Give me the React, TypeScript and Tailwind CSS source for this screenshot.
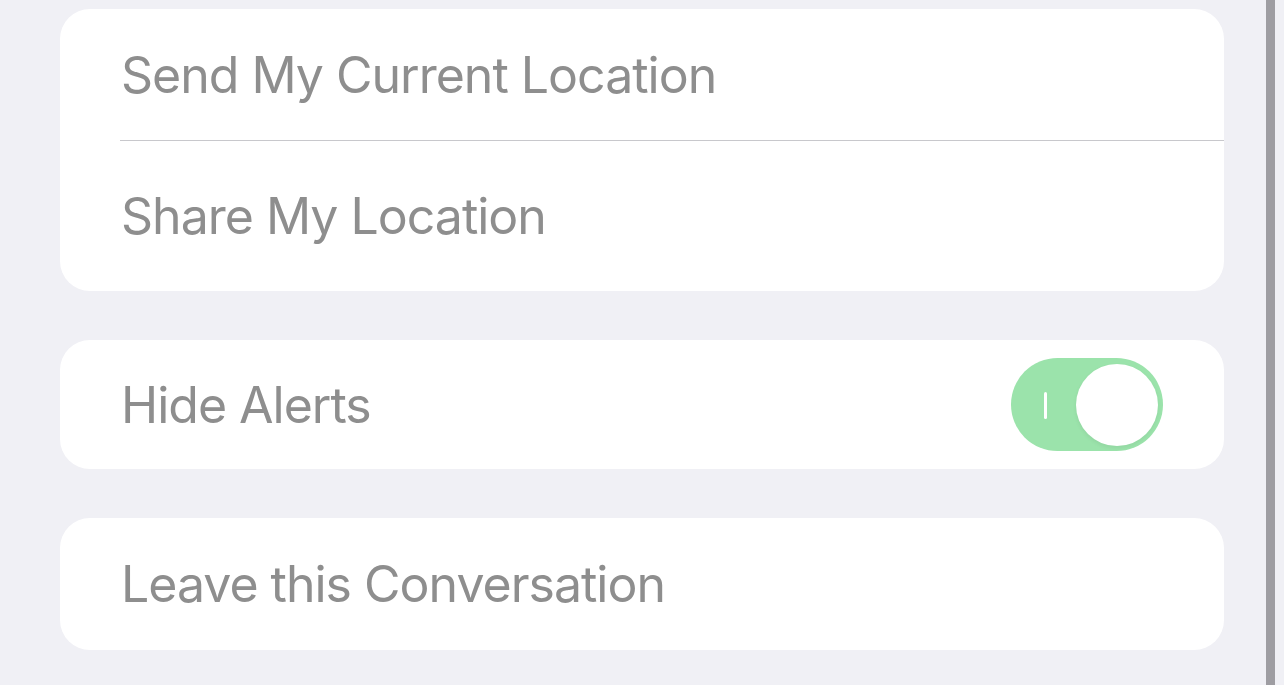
import { useState } from 'react';

function Row({ label, children }: { label: string; children?: React.ReactNode }) {
  return (
    <div className="flex items-center justify-between h-full pl-[61px] pr-[61px]">
      <span className="text-[50px] leading-none text-[#8e8e8e] tracking-[-1px]">{label}</span>
      {children}
    </div>
  );
}

function Toggle({ on, onChange }: { on: boolean; onChange: () => void }) {
  return (
    <button
      onClick={onChange}
      className={`relative w-[152px] h-[93px] rounded-full flex items-center px-[5px] ${on ? 'bg-[#9be3ab] justify-end' : 'bg-[#e9e9eb] justify-start'}`}
    >
      {on && <span className="absolute left-[33px] top-[34px] w-[3px] h-[27px] bg-white rounded-sm" />}
      <span className="w-[82px] h-[82px] rounded-full bg-white shadow-[0_2px_4px_rgba(0,0,0,0.06)]" />
    </button>
  );
}

export default function App() {
  const [hideAlerts, setHideAlerts] = useState(true);

  return (
    <div className="h-[685px] w-[1284px] bg-[#f0f0f5] flex overflow-hidden font-['Inter','Liberation_Sans',sans-serif]">
      <div className="w-[1164px] shrink-0 ml-[60px] pt-[9px] flex flex-col gap-[49px]">
        {/* Location */}
        <div className="bg-white rounded-[30px] overflow-hidden">
          <div className="h-[131px]">
            <Row label="Send My Current Location" />
          </div>
          <div className="ml-[60px] h-px bg-[#c8c8cc]" />
          <div className="h-[150px]">
            <Row label="Share My Location" />
          </div>
        </div>

        {/* Alerts */}
        <div className="bg-white rounded-[30px] h-[129px]">
          <Row label="Hide Alerts">
            <Toggle on={hideAlerts} onChange={() => setHideAlerts(!hideAlerts)} />
          </Row>
        </div>

        {/* Leave */}
        <div className="bg-white rounded-[30px] h-[132px]">
          <Row label="Leave this Conversation" />
        </div>
      </div>

      {/* scroll indicator */}
      <div className="ml-[42px] w-[9px] shrink-0 h-full bg-[#9e9da2]" />
    </div>
  );
}
